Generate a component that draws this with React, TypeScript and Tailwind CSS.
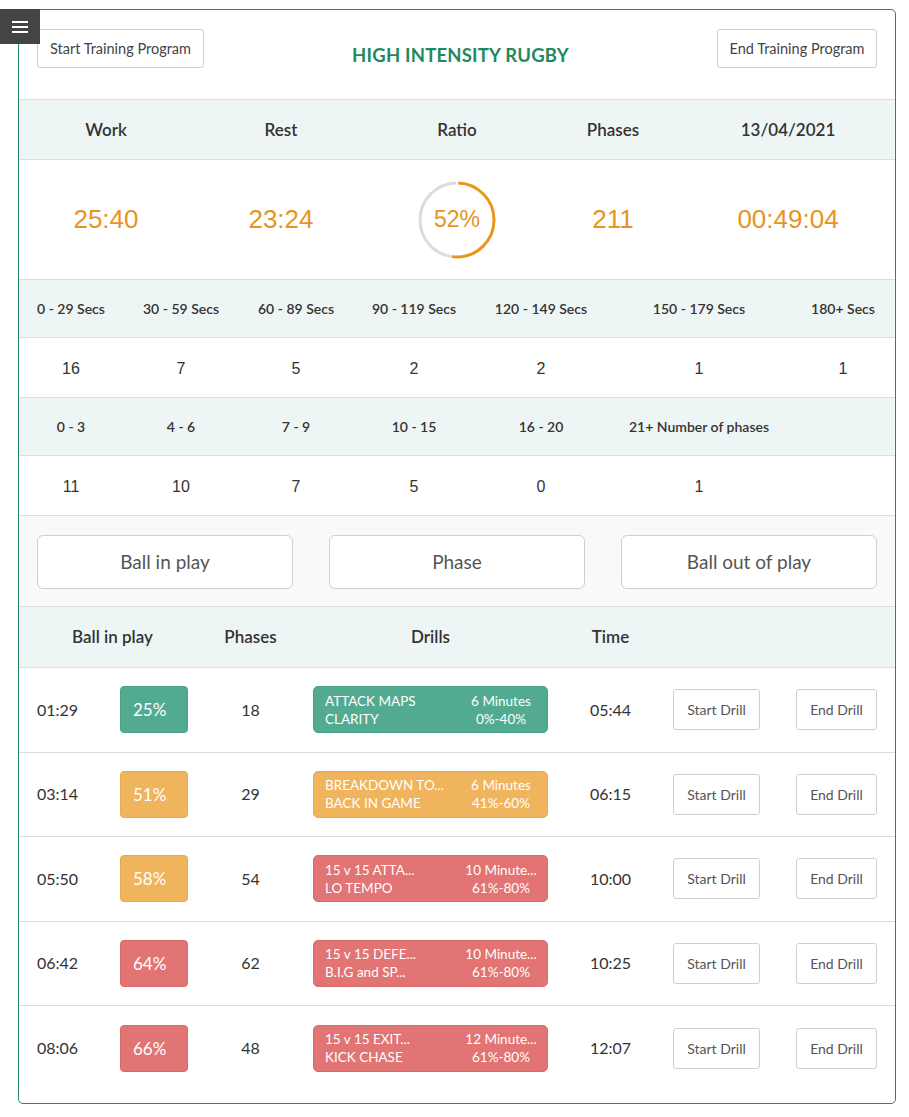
import React from "react";

const statHeads = ["Work", "Rest", "Ratio", "Phases", "13/04/2021"];
const secHeads = ["0 - 29 Secs", "30 - 59 Secs", "60 - 89 Secs", "90 - 119 Secs", "120 - 149 Secs", "150 - 179 Secs", "180+ Secs"];
const secVals = ["16", "7", "5", "2", "2", "1", "1"];
const phaseHeads = ["0 - 3", "4 - 6", "7 - 9", "10 - 15", "16 - 20", "21+ Number of phases", ""];
const phaseVals = ["11", "10", "7", "5", "0", "1", ""];

type Tone = "green" | "orange" | "red";

const drills: { t: string; pct: string; tone: Tone; drillTone: Tone; phases: string; a: string; b: string; c: string; d: string; time: string }[] = [
  { t: "01:29", pct: "25%", tone: "green", drillTone: "green", phases: "18", a: "ATTACK MAPS", b: "CLARITY", c: "6 Minutes", d: "0%-40%", time: "05:44" },
  { t: "03:14", pct: "51%", tone: "orange", drillTone: "orange", phases: "29", a: "BREAKDOWN TO...", b: "BACK IN GAME", c: "6 Minutes", d: "41%-60%", time: "06:15" },
  { t: "05:50", pct: "58%", tone: "orange", drillTone: "red", phases: "54", a: "15 v 15 ATTA...", b: "LO TEMPO", c: "10 Minute...", d: "61%-80%", time: "10:00" },
  { t: "06:42", pct: "64%", tone: "red", drillTone: "red", phases: "62", a: "15 v 15 DEFE...", b: "B.I.G and SP...", c: "10 Minute...", d: "61%-80%", time: "10:25" },
  { t: "08:06", pct: "66%", tone: "red", drillTone: "red", phases: "48", a: "15 v 15 EXIT...", b: "KICK CHASE", c: "12 Minute...", d: "61%-80%", time: "12:07" },
];

const toneClass: Record<Tone, string> = {
  green: "bg-[#52ab91] border-[#48a086]",
  orange: "bg-[#f0b45c] border-[#e8aa50]",
  red: "bg-[#e27474] border-[#d96a6a]",
};

const Ring = () => {
  const r = 37;
  const C = 2 * Math.PI * r;
  const deg = (d: number) => (C * d) / 360;
  return (
    <svg width="82" height="82" viewBox="0 0 82 82" className="absolute inset-0">
      <g transform="rotate(-90 41 41)">
        <circle cx="41" cy="41" r={r} fill="none" stroke="#dcdcdc" strokeWidth="3"
          strokeDasharray={`${deg(169)} ${C}`} strokeDashoffset={-deg(189)} />
        <circle cx="41" cy="41" r={r} fill="none" stroke="#e8961c" strokeWidth="3"
          strokeDasharray={`${deg(186)} ${C}`} strokeDashoffset={-deg(2)} />
      </g>
    </svg>
  );
};

const App = () => {
  return (
    <div className="relative min-h-[1117px] bg-white font-['Lato','Noto_Sans',sans-serif] text-[#333]">
      <button className="absolute top-0 left-0 z-10 flex h-[35px] w-[40px] flex-col items-center justify-center gap-[3px] bg-[#444]">
        <span className="h-[2px] w-[16px] bg-white" />
        <span className="h-[2px] w-[16px] bg-white" />
        <span className="h-[2px] w-[16px] bg-white" />
      </button>

      <div className="mx-[18px] mt-[9px] w-[878px] overflow-hidden rounded-[5px] border border-[#26866c] pb-[12px]">
        {/* header */}
        <div className="flex h-[90px] items-start justify-between border-b border-[#dedede] px-[18px] pt-[19px]">
          <button className="h-[39px] w-[167px] rounded-[3px] border border-[#cfcfcf] bg-white text-[14.5px] text-[#444]">
            Start Training Program
          </button>
          <h1 className="mt-[13px] text-[18.5px] font-bold tracking-[0.2px] text-[#1e8a5f]">HIGH INTENSITY RUGBY</h1>
          <button className="h-[39px] w-[160px] rounded-[3px] border border-[#cfcfcf] bg-white text-[14.5px] text-[#444]">
            End Training Program
          </button>
        </div>

        {/* stats */}
        <div className="grid h-[60px] grid-cols-[174px_176px_176px_136px_1fr] items-center border-b border-[#dedede] bg-[#eef6f5] text-center text-[17px] font-semibold">
          {statHeads.map((h) => (
            <div key={h}>{h}</div>
          ))}
        </div>
        <div className="grid h-[120px] grid-cols-[174px_176px_176px_136px_1fr] items-center border-b border-[#dedede] text-center font-['Liberation_Sans',Arial,sans-serif] text-[26px] text-[#e5951f]">
          <div>25:40</div>
          <div>23:24</div>
          <div className="flex justify-center">
            <div className="relative flex h-[82px] w-[82px] items-center justify-center">
              <Ring />
              <span className="text-[23px]">52%</span>
            </div>
          </div>
          <div>211</div>
          <div>00:49:04</div>
        </div>

        {/* seconds */}
        <div className="grid h-[58px] grid-cols-[104px_116px_114px_122px_132px_184px_1fr] items-center border-b border-[#dedede] bg-[#eef6f5] text-center text-[14px] font-semibold">
          {secHeads.map((h) => (
            <div key={h}>{h}</div>
          ))}
        </div>
        <div className="grid h-[60px] grid-cols-[104px_116px_114px_122px_132px_184px_1fr] items-center border-b border-[#dedede] pt-[2px] text-center font-['Liberation_Sans',Arial,sans-serif] text-[16px]">
          {secVals.map((v, i) => (
            <div key={i}>{v}</div>
          ))}
        </div>
        <div className="grid h-[58px] grid-cols-[104px_116px_114px_122px_132px_184px_1fr] items-center border-b border-[#dedede] bg-[#eef6f5] text-center text-[14px] font-semibold">
          {phaseHeads.map((h, i) => (
            <div key={i}>{h}</div>
          ))}
        </div>
        <div className="grid h-[60px] grid-cols-[104px_116px_114px_122px_132px_184px_1fr] items-center border-b border-[#dedede] pt-[2px] text-center font-['Liberation_Sans',Arial,sans-serif] text-[16px]">
          {phaseVals.map((v, i) => (
            <div key={i}>{v}</div>
          ))}
        </div>

        {/* action buttons */}
        <div className="flex h-[91px] items-start justify-between border-b border-[#dedede] bg-[#f9f9f9] px-[18px] pt-[19px]">
          {["Ball in play", "Phase", "Ball out of play"].map((b) => (
            <button key={b} className="h-[54px] w-[256px] rounded-[6px] border border-[#cfcfcf] bg-white text-[19px] text-[#555]">
              {b}
            </button>
          ))}
        </div>

        {/* drills header */}
        <div className="flex h-[61px] items-center border-b border-[#dedede] bg-[#eef6f5] pl-[18px] text-center text-[17px] font-semibold">
          <div className="w-[151px]">Ball in play</div>
          <div className="w-[125px]">Phases</div>
          <div className="w-[235px]">Drills</div>
          <div className="w-[125px]">Time</div>
        </div>

        {drills.map((d, i) => (
          <div
            key={d.t}
            className={`flex h-[84.5px] items-center pl-[18px] text-[16px] ${i < drills.length - 1 ? "border-b border-[#dedede]" : ""}`}
          >
            <div className="w-[83px]">{d.t}</div>
            <div className={`flex h-[47px] w-[68px] items-center rounded-[4px] border pl-[12px] text-[17px] text-white ${toneClass[d.tone]}`}>
              {d.pct}
            </div>
            <div className="w-[125px] text-center">{d.phases}</div>
            <div className={`flex h-[47px] w-[235px] items-center justify-between rounded-[5px] border pl-[11px] pr-[8px] text-[13.5px] leading-[18px] text-white ${toneClass[d.drillTone]}`}>
              <div className="flex flex-col">
                <span>{d.a}</span>
                <span>{d.b}</span>
              </div>
              <div className="flex w-[76px] flex-col text-center">
                <span>{d.c}</span>
                <span>{d.d}</span>
              </div>
            </div>
            <div className="w-[125px] text-center">{d.time}</div>
            <button className="h-[41px] w-[87px] rounded-[3px] border border-[#cfcfcf] bg-white text-[14px] text-[#555]">
              Start Drill
            </button>
            <button className="ml-[36px] h-[41px] w-[81px] rounded-[3px] border border-[#cfcfcf] bg-white text-[14px] text-[#555]">
              End Drill
            </button>
          </div>
        ))}
      </div>
    </div>
  );
};

export default App;
